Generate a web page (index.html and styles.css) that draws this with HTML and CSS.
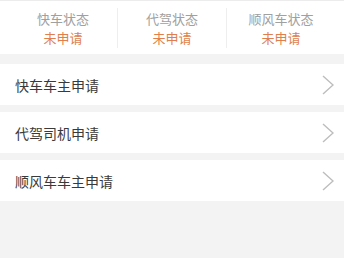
FILE: index.html
```html
<!DOCTYPE html>
<html lang="zh">
<head>
<meta charset="utf-8">
<link rel="stylesheet" href="styles.css">
</head>
<body>
<div class="page">
  <div class="status">
    <div class="col"><div class="label">快车状态</div><div class="value">未申请</div></div>
    <div class="col"><div class="label">代驾状态</div><div class="value">未申请</div></div>
    <div class="col"><div class="label">顺风车状态</div><div class="value">未申请</div></div>
  </div>
  <div class="list">
    <div class="row"><span class="title">快车车主申请</span>
      <svg class="chev" width="12" height="20" viewBox="0 0 12 20"><path d="M1 1 L11 10 L1 19" fill="none" stroke="#bdbdbd" stroke-width="1.4"/></svg></div>
    <div class="row"><span class="title">代驾司机申请</span>
      <svg class="chev" width="12" height="20" viewBox="0 0 12 20"><path d="M1 1 L11 10 L1 19" fill="none" stroke="#bdbdbd" stroke-width="1.4"/></svg></div>
    <div class="row"><span class="title">顺风车车主申请</span>
      <svg class="chev" width="12" height="20" viewBox="0 0 12 20"><path d="M1 1 L11 10 L1 19" fill="none" stroke="#bdbdbd" stroke-width="1.4"/></svg></div>
  </div>
</div>
</body>
</html>
```
FILE: styles.css
```css
html, body { margin: 0; padding: 0; }
body {
  background: #f3f3f3;
  font-family: "Noto Sans CJK SC", "Noto Sans", sans-serif;
  width: 344px;
  height: 258px;
  overflow: hidden;
}
.page { display: flex; flex-direction: column; }
.status {
  display: flex;
  background: #fff;
  border-top: 1px solid #ececec;
  height: 53px;
  padding: 0 9px;
  align-items: center;
}
.col {
  flex: 1;
  display: flex;
  flex-direction: column;
  align-items: center;
  justify-content: center;
  height: 40px;
  border-left: 1px solid #eeeeee;
}
.col:first-child { border-left: none; }
.label { font-size: 13px; line-height: 19px; color: #a0a0a0; }
.value { font-size: 13px; line-height: 19px; color: #e07e4c; font-weight: 400; }
.list {
  display: flex;
  flex-direction: column;
  gap: 7px;
  margin-top: 10px;
}
.row {
  display: flex;
  align-items: center;
  justify-content: space-between;
  background: #fff;
  height: 41px;
  padding: 0 10px 0 15px;
}
.title { font-size: 14px; color: #3a3a3a; }
.chev { display: block; }
```
